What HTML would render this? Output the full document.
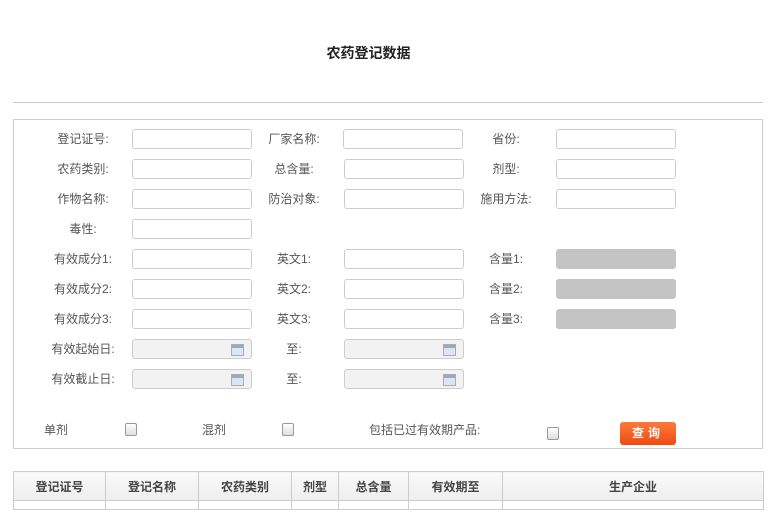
<!DOCTYPE html>
<html><head><meta charset="utf-8"><style>
body{margin:0;width:777px;height:519px;background:#fff;font-family:"Liberation Sans","Noto Sans CJK SC",sans-serif;font-size:12px;color:#555;position:relative;overflow:hidden}
.a{position:absolute}
.t{left:0;width:737px;top:43px;text-align:center;font-weight:bold;font-size:14px;color:#222}
.hr{left:13px;top:102px;width:750px;height:1px;background:#ccc}
.box{left:13px;top:119px;width:750px;height:330px;border:1px solid #ccc;box-sizing:border-box}
.l{width:90px;text-align:center;line-height:20px;height:20px;margin-top:1px}
.i{width:120px;height:20px;border:1px solid #ccc;border-radius:3px;box-sizing:border-box;background:#fff}
.g{background:#c4c4c4;border-color:#c4c4c4}
.d{background:#f2f2f2}
.d:after{content:"";position:absolute;right:7px;top:4px;width:11px;height:10px;background:linear-gradient(#9ab 0 3px,#dde5f0 3px);border:1px solid #aab}
.cb{width:10px;height:11px;border:1px solid #999;border-radius:2px;background:linear-gradient(#fff,#ddd)}
.btn{left:620px;top:422px;width:56px;height:23px;border-radius:3px;background:linear-gradient(#ff7a3a,#ee4a12);color:#fff;font-weight:bold;text-align:center;line-height:23px;letter-spacing:4px}
table{position:absolute;left:13px;top:471px;width:751px;border-collapse:collapse}
td{border:1px solid #ccc;text-align:center;font-weight:bold;color:#444;height:28px;padding:0;background:linear-gradient(#fafafa,#eee)}
tr.e td{height:8px;background:#fff}
</style></head><body>
<div class="a t">农药登记数据</div>
<div class="a hr"></div>
<div class="a box"></div>

<div class="a l" style="left:38px;top:128px">登记证号:</div><div class="a i" style="left:132px;top:129px"></div>
<div class="a l" style="left:249px;top:128px">厂家名称:</div><div class="a i" style="left:343px;top:129px"></div>
<div class="a l" style="left:461px;top:128px">省份:</div><div class="a i" style="left:556px;top:129px"></div>

<div class="a l" style="left:38px;top:158px">农药类别:</div><div class="a i" style="left:132px;top:159px"></div>
<div class="a l" style="left:249px;top:158px">总含量:</div><div class="a i" style="left:344px;top:159px"></div>
<div class="a l" style="left:461px;top:158px">剂型:</div><div class="a i" style="left:556px;top:159px"></div>

<div class="a l" style="left:38px;top:188px">作物名称:</div><div class="a i" style="left:132px;top:189px"></div>
<div class="a l" style="left:249px;top:188px">防治对象:</div><div class="a i" style="left:344px;top:189px"></div>
<div class="a l" style="left:461px;top:188px">施用方法:</div><div class="a i" style="left:556px;top:189px"></div>

<div class="a l" style="left:38px;top:218px">毒性:</div><div class="a i" style="left:132px;top:219px"></div>

<div class="a l" style="left:38px;top:248px">有效成分1:</div><div class="a i" style="left:132px;top:249px"></div>
<div class="a l" style="left:249px;top:248px">英文1:</div><div class="a i" style="left:344px;top:249px"></div>
<div class="a l" style="left:461px;top:248px">含量1:</div><div class="a i g" style="left:556px;top:249px"></div>

<div class="a l" style="left:38px;top:278px">有效成分2:</div><div class="a i" style="left:132px;top:279px"></div>
<div class="a l" style="left:249px;top:278px">英文2:</div><div class="a i" style="left:344px;top:279px"></div>
<div class="a l" style="left:461px;top:278px">含量2:</div><div class="a i g" style="left:556px;top:279px"></div>

<div class="a l" style="left:38px;top:308px">有效成分3:</div><div class="a i" style="left:132px;top:309px"></div>
<div class="a l" style="left:249px;top:308px">英文3:</div><div class="a i" style="left:344px;top:309px"></div>
<div class="a l" style="left:461px;top:308px">含量3:</div><div class="a i g" style="left:556px;top:309px"></div>

<div class="a l" style="left:38px;top:338px">有效起始日:</div><div class="a i d" style="left:132px;top:339px"></div>
<div class="a l" style="left:249px;top:338px">至:</div><div class="a i d" style="left:344px;top:339px"></div>

<div class="a l" style="left:38px;top:368px">有效截止日:</div><div class="a i d" style="left:132px;top:369px"></div>
<div class="a l" style="left:249px;top:368px">至:</div><div class="a i d" style="left:344px;top:369px"></div>

<div class="a" style="left:44px;top:421px">单剂</div><div class="a cb" style="left:125px;top:423px"></div>
<div class="a" style="left:202px;top:421px">混剂</div><div class="a cb" style="left:282px;top:423px"></div>
<div class="a" style="left:369px;top:421px">包括已过有效期产品:</div><div class="a cb" style="left:547px;top:427px"></div>
<div class="a btn">查询</div>

<table>
<tr><td style="width:91px">登记证号</td><td style="width:92px">登记名称</td><td style="width:92px">农药类别</td><td style="width:46px">剂型</td><td style="width:69px">总含量</td><td style="width:93px">有效期至</td><td>生产企业</td></tr>
<tr class="e"><td></td><td></td><td></td><td></td><td></td><td></td><td></td></tr>
</table>
</body></html>
